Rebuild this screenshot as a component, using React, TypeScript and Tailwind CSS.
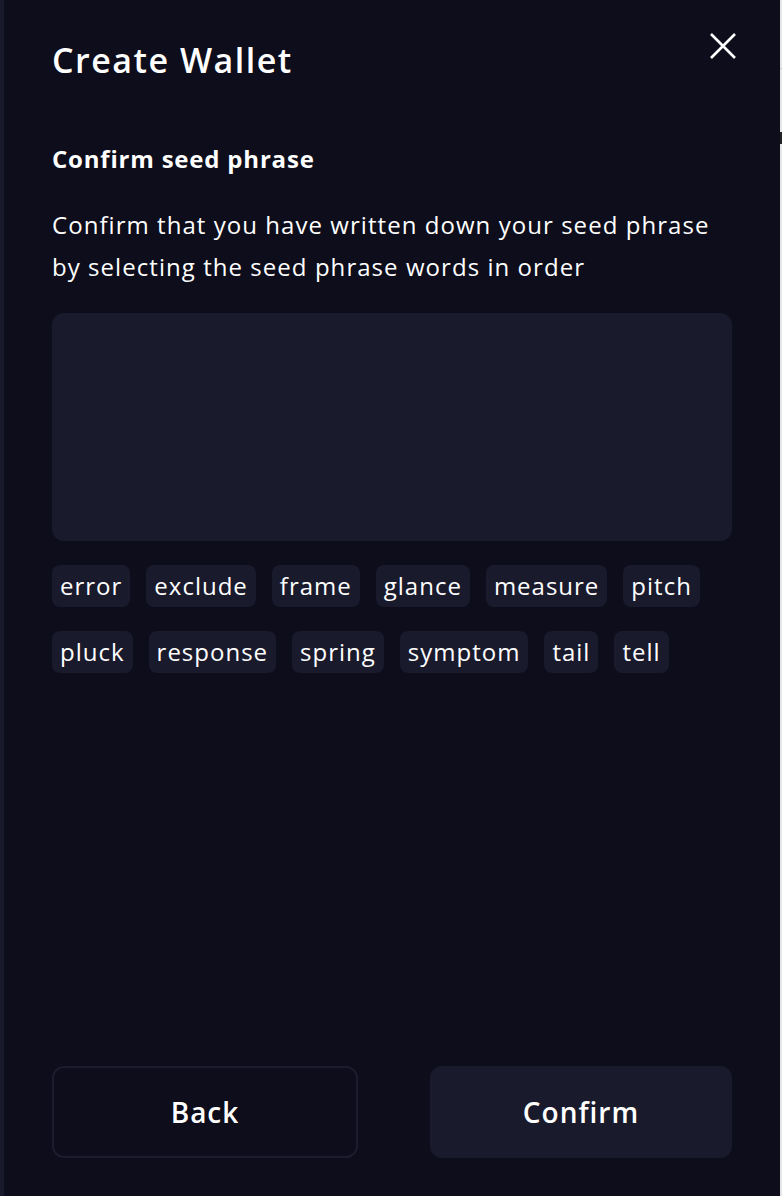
const words = [
  ["error", "exclude", "frame", "glance", "measure", "pitch"],
  ["pluck", "response", "spring", "symptom", "tail", "tell"],
];

function WordChip({ word }: { word: string }) {
  return (
    <button className="h-[42px] rounded-lg bg-[#1a1a2d] px-2 text-[24px] leading-none tracking-[1px] text-white">
      {word}
    </button>
  );
}

function CloseIcon() {
  return (
    <svg width="26" height="26" viewBox="0 0 26 26" fill="none">
      <path d="M1 1L25 25M25 1L1 25" stroke="white" strokeWidth="2.6" strokeLinecap="butt" />
    </svg>
  );
}

export default function App() {
  return (
    <div
      className="flex h-[1196px] w-full bg-[#0d0d1b] text-white"
      style={{ fontFamily: '"Open Sans", "Liberation Sans", sans-serif' }}
    >
      {/* left edge of the underlying page */}
      <div className="w-[4px] shrink-0 bg-[#1a1a2d]" />

      {/* modal panel */}
      <div className="flex flex-1 flex-col px-12 pb-[38px]">
        <div className="flex items-start justify-between pt-[36px]">
          <h1 className="text-[34px] font-semibold leading-[48px] tracking-[1.5px]">Create Wallet</h1>
          <button className="-mr-[4px] mt-[-3px] text-white">
            <CloseIcon />
          </button>
        </div>

        <h2 className="mt-[59px] text-[24px] font-bold leading-[32px] tracking-[0.8px]">Confirm seed phrase</h2>

        <p className="mt-[29px] text-[24px] leading-[42px] tracking-[1.05px] text-white">
          Confirm that you have written down your seed phrase
          <br />
          by selecting the seed phrase words in order
        </p>

        <div className="mt-[25px] h-[228px] rounded-xl bg-[#1a1a2d]" />

        <div className="mt-[24px] flex flex-col gap-6">
          {words.map((row, i) => (
            <div key={i} className="flex gap-4">
              {row.map((w) => (
                <WordChip key={w} word={w} />
              ))}
            </div>
          ))}
        </div>

        <div className="mt-auto flex justify-between">
          <button className="h-[92px] w-[306px] rounded-xl border-2 border-[#1c1c2f] text-[28px] font-semibold tracking-[1px]">
            Back
          </button>
          <button className="h-[92px] w-[302px] rounded-xl bg-[#1a1a2d] text-[28px] font-semibold tracking-[1px]">
            Confirm
          </button>
        </div>
      </div>

      {/* right edge of the underlying page */}
      <div className="relative w-[2px] shrink-0 bg-[#e6e6e8]">
        <div className="absolute left-0 right-0 top-[68px] h-px bg-[#c4c4c8]" />
        <div className="absolute left-0 top-[132px] h-[12px] w-[2px] bg-[#222]" />
      </div>
    </div>
  );
}
